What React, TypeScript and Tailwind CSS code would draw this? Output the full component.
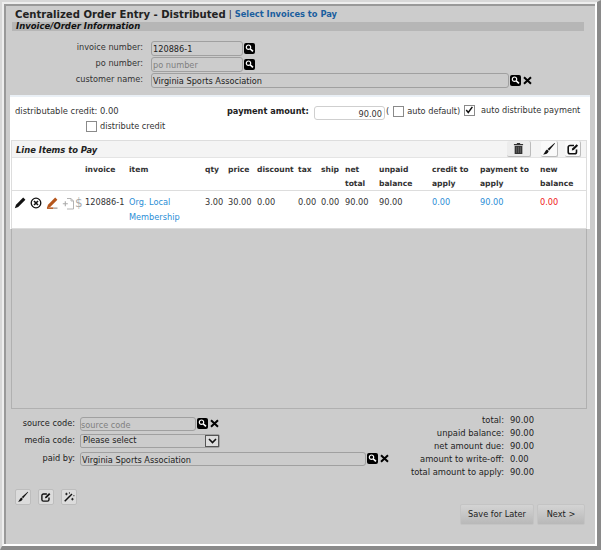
import type { ReactNode } from 'react'

function SearchBtn() {
  return (
    <span className="inline-flex items-center justify-center w-[11px] h-[11px] bg-black rounded-[2px] shrink-0">
      <svg viewBox="0 0 11 11" className="w-[11px] h-[11px]" fill="none">
        <circle cx="4.5" cy="4.2" r="2.2" stroke="#fff" strokeWidth="1.2" />
        <path d="M6.2 5.9 9 8.4" stroke="#fff" strokeWidth="1.6" />
      </svg>
    </span>
  )
}

function ClearBtn() {
  return (
    <svg viewBox="0 0 9 9" className="w-[9px] h-[9px] shrink-0" fill="none">
      <path d="M1 1.2 8 7.8M8 1.2 1 7.8" stroke="#000" strokeWidth="2" />
    </svg>
  )
}

function Brush({ className = 'w-[14px] h-[14px]' }: { className?: string }) {
  return (
    <svg viewBox="0 0 14 14" className={className}>
      <path d="M12.6 1 13 1.5 7.2 8.4 5.6 7z" fill="#111" />
      <path d="M5 7.6 6.7 9.1C6.2 11.5 4 12.6 1 12.6 2.6 11.6 3.2 8.6 5 7.6z" fill="#111" />
    </svg>
  )
}

function EditBox({ className = 'w-[14px] h-[14px]' }: { className?: string }) {
  return (
    <svg viewBox="0 0 14 14" className={className} fill="none">
      <path d="M10.5 7.5V10a1.8 1.8 0 0 1-1.8 1.8H4A1.8 1.8 0 0 1 2.2 10V5.3A1.8 1.8 0 0 1 4 3.5h4" stroke="#111" strokeWidth="1.6" />
      <path d="M5.8 8.6 6.2 6.6 10.6 2.2 12.1 3.7 7.7 8.1z" fill="#111" />
    </svg>
  )
}

function Wand({ className = 'w-[14px] h-[14px]' }: { className?: string }) {
  return (
    <svg viewBox="0 0 14 14" className={className} fill="none">
      <path d="M2 12 10.5 3.5" stroke="#111" strokeWidth="1.7" />
      <path d="M4 2v3M2.5 3.5h3M11 8v3M9.5 9.5h3M7.5 1.5v1.6M12 5.5h1.4" stroke="#111" strokeWidth="1" />
    </svg>
  )
}

function Trash() {
  return (
    <svg viewBox="0 0 12 14" className="w-[11px] h-[13px]">
      <path d="M1 2.2h10v1.3H1zM4.2 1h3.6v1.2H4.2z" fill="#333" />
      <path d="M1.8 4.2h8.4V13H1.8z" fill="#333" />
      <path d="M4 5.2v6.6M6 5.2v6.6M8 5.2v6.6" stroke="#777" strokeWidth=".7" />
    </svg>
  )
}

function Pencil({ color = '#111', underline = false }: { color?: string; underline?: boolean }) {
  return (
    <svg viewBox="0 0 12 12" className="w-[12px] h-[12px] shrink-0">
      <path d="M9.2 .6 11.4 2.8 4.2 10 .8 11.2 2 7.8z" fill={color} />
      {underline && <path d="M1 10.4h6.5v1.5H1z" fill={color} />}
      {underline && <path d="M7.5 10.4h4v1.5h-4z" fill="#aaa" />}
    </svg>
  )
}

function CircleX() {
  return (
    <svg viewBox="0 0 12 12" className="w-[12px] h-[12px] shrink-0" fill="none">
      <circle cx="6" cy="6" r="4.8" stroke="#111" strokeWidth="1.3" />
      <path d="M4 4 8 8M8 4 4 8" stroke="#111" strokeWidth="1.6" />
    </svg>
  )
}

function DocPlus() {
  return (
    <svg viewBox="0 0 13 13" className="w-[13px] h-[13px] shrink-0" fill="none">
      <path d="M5 1.5h4l2.5 2.5v8H5" stroke="#aaa" strokeWidth=".9" />
      <path d="M9 1.5V4h2.5" stroke="#aaa" strokeWidth=".8" />
      <path d="M.8 6.8h5M3.3 4.3v5" stroke="#aaa" strokeWidth="1.1" />
    </svg>
  )
}

function Field({ label, value, muted, w, tail }: { label: string; value: string; muted?: boolean; w: string; tail?: ReactNode }) {
  return (
    <div className="flex items-center h-[16px]">
      <span className="w-[142px] pr-2 pb-[2px] text-right">{label}</span>
      <span className={`${w} h-[15px] leading-[15px] pl-[1px] border border-[#a0a0a0] rounded-[3px] ${muted ? 'text-[#808080]' : 'text-[#222]'}`}>{value}</span>
      <span className="flex items-center gap-[2px] ml-[1px]">{tail}</span>
    </div>
  )
}

function CheckBox({ checked }: { checked?: boolean }) {
  return (
    <span className="relative inline-block w-[11px] h-[11px] bg-white border border-[#8a8a8a] shrink-0">
      {checked && (
        <svg viewBox="0 0 11 11" className="absolute left-0 top-0 w-[9px] h-[9px]" fill="none">
          <path d="M1.5 5 4 8 9 1" stroke="#111" strokeWidth="1.8" />
        </svg>
      )}
    </span>
  )
}

function IconBtn({ children, className = '' }: { children: ReactNode; className?: string }) {
  return (
    <span className={`flex items-center justify-center h-[16px] rounded-[2px] border-b border-r border-[#bbbbbb] ${className}`}>{children}</span>
  )
}

const cols = 'grid grid-cols-[73px_44px_76px_23px_29px_41px_23px_24px_34px_53px_48px_60px_47px]'

const heads = ['', 'invoice', 'item', 'qty', 'price', 'discount', 'tax', 'ship', 'net total', 'unpaid balance', 'credit to apply', 'payment to apply', 'new balance']

export default function App() {
  return (
    <div className="w-[601px] h-[550px] border-t-2 border-l-2 border-r-[4px] border-b-[4px] border-t-[#d8d8d8] border-l-[#d8d8d8] border-r-[#8a8a8a] border-b-[#8a8a8a] text-[8.2px] text-[#333] overflow-hidden" style={{ fontFamily: '"DejaVu Sans", Verdana, sans-serif' }}>
      <div className="h-full border-t-2 border-l-2 border-r-2 border-b-2 border-t-[#eeeeee] border-l-[#eeeeee] border-r-white border-b-white">
        <div className="h-full border-t-2 border-l-2 border-[#999999] bg-[#cccccc]">
          <div className="pt-[3px] pl-[9px] h-[14px] flex items-center gap-[3px] whitespace-nowrap">
            <span className="text-[10.1px] font-bold text-[#222]">Centralized Order Entry - Distributed</span>
            <span className="text-[#222] text-[9px]">|</span>
            <span className="text-[8.3px] font-bold text-[#1a5e9e]">Select Invoices to Pay</span>
          </div>
          <div className="mt-[2px] ml-[6px] w-[572px] h-[9px] bg-[#b6b6b6] pl-[4px] flex items-center">
            <span className="text-[8.5px] font-bold italic text-[#111]">Invoice/Order Information</span>
          </div>
          <div className="mt-[9px] ml-[3px]">
            <Field label="invoice number:" value="120886-1" w="w-[92px]" tail={<SearchBtn />} />
            <Field label="po number:" value="po number" muted w="w-[92px]" tail={<SearchBtn />} />
            <Field label="customer name:" value="Virginia Sports Association" w="w-[358px]" tail={<><SearchBtn /><ClearBtn /></>} />
          </div>

          <div className="mt-[7px] ml-[4px] w-[580px] h-[134px] bg-white border-t-2 border-[#eaf0f6] flex flex-col">
            <div className="relative h-[43px] shrink-0">
              <span className="absolute left-[5px] top-[8px] text-[8.4px]">distributable credit: 0.00</span>
              <span className="absolute left-[76px] top-[23px] flex items-center gap-[3px]"><CheckBox />distribute credit</span>
              <span className="absolute left-[217px] top-[8px] font-bold text-[8.2px] text-[#222]">payment amount:</span>
              <span className="absolute left-[304px] top-[9px] w-[71px] h-[14px] leading-[14px] border border-[#cfcfcf] rounded-[3px] pr-[2px] text-right">90.00</span>
              <span className="absolute left-[376px] top-[8px] flex items-center gap-[4px] whitespace-nowrap">(<CheckBox /><span className="-ml-[1px]">auto default)</span></span>
              <span className="absolute left-[454px] top-[7px] flex items-center gap-[6px] whitespace-nowrap"><CheckBox checked />auto distribute payment</span>
            </div>
            <div className="ml-[1px] w-[576px] flex-1 border border-[#dddddd] flex flex-col">
              <div className="h-[17px] bg-[#f4f4f4] flex items-center justify-between pl-[4px] pr-[5px] border-b border-[#e4e4e4]">
                <span className="font-bold italic text-[8.4px] text-[#222] pt-[2px]">Line Items to Pay</span>
                <span className="flex items-center">
                  <IconBtn className="w-[24px] bg-[#ececec]"><Trash /></IconBtn>
                  <IconBtn className="w-[17px] ml-[10px] bg-[#fafafa]"><Brush /></IconBtn>
                  <IconBtn className="w-[16px] ml-[7px] bg-[#fafafa]"><EditBox /></IconBtn>
                </span>
              </div>
              <div className={`${cols} h-[33px] border-b border-[#dddddd] font-bold text-[7.6px] leading-[14px] pt-[5px] text-[#333]`}>
                {heads.map((h, i) => <span key={i} className="pr-[2px]">{h}</span>)}
              </div>
              <div className={`${cols} flex-1 leading-[14px] pt-[4px]`}>
                <span className="flex items-center gap-[4px] h-[14px] mt-[1px] pl-[2px]">
                  <Pencil />
                  <CircleX />
                  <Pencil color="#b5561c" underline />
                  <span className="flex items-center"><DocPlus /><span className="text-[#aaa] text-[12px] leading-none">$</span></span>
                </span>
                <span>120886-1</span>
                <span className="text-[#2b8ed6] leading-[15px]">Org. Local Membership</span>
                <span>3.00</span>
                <span>30.00</span>
                <span>0.00</span>
                <span>0.00</span>
                <span>0.00</span>
                <span>90.00</span>
                <span>90.00</span>
                <span className="text-[#2b8ed6]">0.00</span>
                <span className="text-[#2b8ed6]">90.00</span>
                <span className="text-[#f02020]">0.00</span>
              </div>
            </div>
          </div>

          <div className="ml-[5px] w-[576px] h-[180px] border border-t-0 border-[#b0b0b0]" />

          <div className="ml-[4px] w-[577px] flex justify-between">
            <div className="pt-[7px] flex flex-col gap-[2px]">
              <div className="flex items-center h-[15px]">
                <span className="w-[70px] pr-[5px] text-right text-[#222]">source code:</span>
                <span className="w-[116px] h-[14px] leading-[14px] border border-[#a0a0a0] rounded-[3px] text-[#808080]">source code</span>
                <span className="flex items-center gap-[2px] ml-[1px]"><SearchBtn /><ClearBtn /></span>
              </div>
              <div className="flex items-center h-[15px]">
                <span className="w-[70px] pr-[5px] text-right text-[#222]">media code:</span>
                <span className="w-[140px] h-[14px] flex items-center justify-between border border-[#a0a0a0] rounded-[2px] pl-[2px] text-[#222]">
                  Please select
                  <span className="w-[14px] h-full bg-[#dddddd] border border-[#555] flex items-center justify-center">
                    <svg viewBox="0 0 9 6" className="w-[9px] h-[6px]" fill="none"><path d="M1 1l3.5 3.5L8 1" stroke="#111" strokeWidth="1.6" /></svg>
                  </span>
                </span>
              </div>
              <div className="flex items-center h-[15px] mt-[1px]">
                <span className="w-[70px] pr-[5px] text-right text-[#222]">paid by:</span>
                <span className="w-[286px] h-[14px] leading-[14px] border border-[#a0a0a0] rounded-[3px] pl-[1px] text-[#222]">Virginia Sports Association</span>
                <span className="flex items-center gap-[2px] ml-[1px]"><SearchBtn /><ClearBtn /></span>
              </div>
              <div className="mt-[21px] ml-[5px] flex gap-[7px]">
                <span className="w-[16px] h-[16px] flex items-center justify-center bg-[#dcdcdc] rounded-[2px] border border-[#bdbdbd]"><Brush className="w-[12px] h-[12px]" /></span>
                <span className="w-[16px] h-[16px] flex items-center justify-center bg-[#dcdcdc] rounded-[2px] border border-[#bdbdbd]"><EditBox className="w-[12px] h-[12px]" /></span>
                <span className="w-[16px] h-[16px] flex items-center justify-center bg-[#dcdcdc] rounded-[2px] border border-[#bdbdbd]"><Wand className="w-[12px] h-[12px]" /></span>
              </div>
            </div>
            <div className="flex flex-col items-end pt-[5px]">
              <div className="grid grid-cols-[auto_25px] gap-x-[6px] mr-[52px] leading-[13px] text-[8.4px] text-[#222] text-right">
                <span>total:</span><span className="text-left">90.00</span>
                <span>unpaid balance:</span><span className="text-left">90.00</span>
                <span>net amount due:</span><span className="text-left">90.00</span>
                <span>amount to write-off:</span><span className="text-left">0.00</span>
                <span>total amount to apply:</span><span className="text-left">90.00</span>
              </div>
              <div className="mt-[25px] flex gap-[3px] pr-[2px]">
                <button className="w-[74px] h-[21px] bg-gradient-to-b from-[#d4d4d4] to-[#b8b8b8] rounded-[2px] border border-[#c4c4c4] text-[#222]">Save for Later</button>
                <button className="w-[48px] h-[21px] bg-gradient-to-b from-[#d4d4d4] to-[#b8b8b8] rounded-[2px] border border-[#c4c4c4] text-[#222]">{'Next >'}</button>
              </div>
            </div>
          </div>
        </div>
      </div>
    </div>
  )
}
